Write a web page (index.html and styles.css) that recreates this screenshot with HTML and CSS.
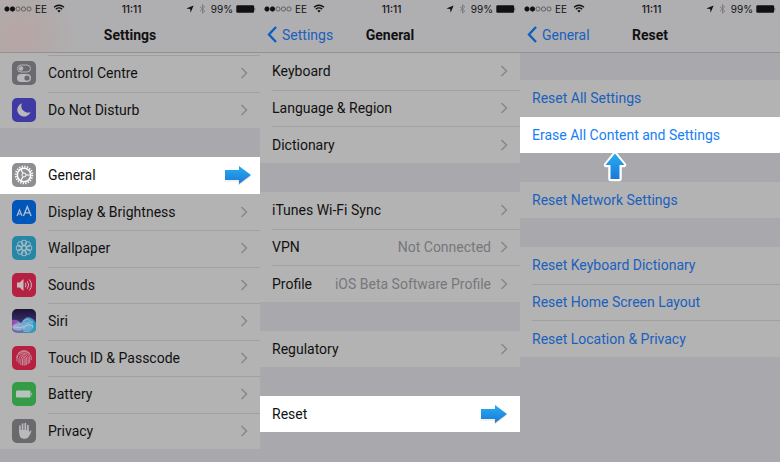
FILE: index.html
```html
<!DOCTYPE html>
<html lang="en">
<head>
<meta charset="utf-8">
<title>Erase All Content and Settings</title>
<link rel="stylesheet" href="styles.css">
</head>
<body>
<svg class="defs" aria-hidden="true">
  <defs>
    <linearGradient id="blue" x1="0" y1="0" x2="0" y2="1"><stop offset="0" stop-color="#27aef0"/><stop offset="1" stop-color="#1c78d8"/></linearGradient>
    <linearGradient id="siri-bg" x1="0" y1="0" x2="0" y2="1"><stop offset="0" stop-color="#1b1237"/><stop offset=".4" stop-color="#34265d"/><stop offset="1" stop-color="#5c7da8"/></linearGradient>
    <linearGradient id="siri-wave" x1="0" y1="0" x2="1" y2="0"><stop offset="0" stop-color="#a43bb0"/><stop offset=".45" stop-color="#6f90ca"/><stop offset="1" stop-color="#229cb9"/></linearGradient>
    <clipPath id="tile"><rect width="24" height="24" rx="5"/></clipPath>
  </defs>
  <symbol id="chevron" viewBox="0 0 8 12"><path d="M1.500 1 6.500 6l-5 5" fill="none" stroke="#88888c" stroke-width="1.500"/></symbol>
  <symbol id="back" viewBox="0 0 10 17"><path d="M9 1 2 8.500 9 16" fill="none" stroke="#0d5fc0" stroke-width="2.400"/></symbol>
  <symbol id="signal" viewBox="0 0 28 6"><g stroke="#111" stroke-width=".8"><circle cx="3" cy="3" r="2.200" fill="#111"/><circle cx="8.500" cy="3" r="2.200" fill="#111"/><g fill="none" stroke="#444" stroke-width=".7"><circle cx="14" cy="3" r="2.100"/><circle cx="19.500" cy="3" r="2.100"/><circle cx="25" cy="3" r="2.100"/></g></g></symbol>
  <symbol id="wifi" viewBox="0 0 12 9"><g fill="none" stroke="#111" stroke-width="1.400"><path d="M1 3.300Q6-.9 11 3.300M2.800 5.200Q6 2.600 9.200 5.200"/></g><path d="M4.300 6.700Q6 5.300 7.700 6.700L6 8.500z" fill="#111"/></symbol>
  <symbol id="locate" viewBox="0 0 8 8"><path d="M7.600.4 4.600 7.800 4.200 3.900.3 3.500z" fill="#111"/></symbol>
  <symbol id="bluetooth" viewBox="0 0 7 10"><path d="M1 2.800 5.700 7 3.500 9.300V.7L5.700 3 1 7.200" fill="none" stroke="#77777a" stroke-width=".9"/></symbol>
  <symbol id="power" viewBox="0 0 20 8"><rect x=".3" y=".3" width="17.800" height="7.400" rx="1.200" fill="#111"/><path d="M18.700 2.500q1.300 1.500 0 3z" fill="#111"/></symbol>
  <symbol id="arrow-right" viewBox="0 0 28 21"><path d="M1 16h14v3.500l11-8.500" fill="none" stroke="#e9e1d6" stroke-width="1.200"/><path d="M1 5h14V1l12 9-12 9v-4H1z" fill="url(#blue)"/></symbol>
  <symbol id="arrow-up" viewBox="0 0 26 32"><path d="M13 3 22 14h-4.500V28h-9V14H4z" fill="#fff" stroke="#fff" stroke-width="4.500" stroke-linejoin="round"/><path d="M13 2.500 22.500 14h-5V28h-9V14h-5z" fill="url(#blue)"/></symbol>
</svg>
<main class="screens">

<section class="screen" aria-label="Settings">
  <header class="bar bar-tinted">
    <div class="status"><span class="side"><svg class="signal"><use href="#signal"/></svg>EE<svg class="wifi"><use href="#wifi"/></svg></span><time>11:11</time><span class="side end"><svg class="locate"><use href="#locate"/></svg><svg class="bluetooth"><use href="#bluetooth"/></svg>99%<svg class="power"><use href="#power"/></svg></span></div>
    <div class="nav"><h1>Settings</h1></div>
  </header>
  <ul class="group rows-2 icons peek">
    <li><a href="#"><svg class="icon" viewBox="0 0 24 24"><rect width="24" height="24" rx="5" fill="#6a6a6f"/><rect x="5.500" y="4" width="13" height="7" rx="3.500" fill="none" stroke="#b5b5b8" stroke-width="1"/><circle cx="9" cy="7.500" r="2.300" fill="#b5b5b8"/><rect x="5" y="13" width="14" height="8" rx="4" fill="#b8b8bb"/><circle cx="15" cy="17" r="2.600" fill="#6a6a6f"/></svg><span>Control Centre</span><svg class="chevron"><use href="#chevron"/></svg></a></li>
    <li><a href="#"><svg class="icon" viewBox="0 0 24 24"><rect width="24" height="24" rx="5" fill="#403aa5"/><path d="M10 5.300A6.800 6.800 0 1 0 18.500 14 6.500 6.500 0 0 1 10 5.300z" fill="#b9b9bd"/></svg><span>Do Not Disturb</span><svg class="chevron"><use href="#chevron"/></svg></a></li>
  </ul>
  <ul class="group rows-8 icons">
    <li class="lit"><a href="#"><svg class="icon" viewBox="0 0 24 24"><rect width="24" height="24" rx="5" fill="#8e8e93"/><g fill="none" stroke="#fff"><circle cx="12" cy="12" r="8.300" stroke-width="2" stroke-dasharray="1.300 1.307"/><circle cx="12" cy="12" r="6.700" stroke-width="1.500"/><circle cx="12" cy="12" r="2" stroke-width="1"/><path d="M14 12h4.500M11 10.300 8.800 6.400M11 13.700l-2.200 3.900" stroke-width="1.200"/></g></svg><span>General</span><svg class="arrow"><use href="#arrow-right"/></svg></a></li>
    <li><a href="#"><svg class="icon" viewBox="0 0 24 24"><rect width="24" height="24" rx="5" fill="#0057b9"/><g fill="none" stroke="#b9c1cc"><path d="m5 16 2.500-6.300L10 16M5.900 14h3.200" stroke-width="1.100"/><path d="m11.500 16 3.800-9.600L19.100 16M12.800 12.900h5" stroke-width="1.300"/></g></svg><span>Display &amp; Brightness</span><svg class="chevron"><use href="#chevron"/></svg></a></li>
    <li><a href="#"><svg class="icon" viewBox="0 0 24 24"><rect width="24" height="24" rx="5" fill="#2785a7"/><g fill="none" stroke="#b6c3c8" stroke-width=".9"><circle cx="12" cy="12" r="2.200"/><circle cx="12" cy="6.800" r="2.700"/><circle cx="15.700" cy="8.300" r="2.700"/><circle cx="17.200" cy="12" r="2.700"/><circle cx="15.700" cy="15.700" r="2.700"/><circle cx="12" cy="17.200" r="2.700"/><circle cx="8.300" cy="15.700" r="2.700"/><circle cx="6.800" cy="12" r="2.700"/><circle cx="8.300" cy="8.300" r="2.700"/></g></svg><span>Wallpaper</span><svg class="chevron"><use href="#chevron"/></svg></a></li>
    <li><a href="#"><svg class="icon" viewBox="0 0 24 24"><rect width="24" height="24" rx="5" fill="#b62041"/><path d="M5 9.500h2.500L11.500 6v12l-4-3.500H5z" fill="#c7babd"/><path d="M13.300 9.800q1.500 2.200 0 4.400M15.300 8.200q2.800 3.800 0 7.600M17.300 6.500q4.300 5.500 0 11" fill="none" stroke="#c7babd" stroke-width="1"/></svg><span>Sounds</span><svg class="chevron"><use href="#chevron"/></svg></a></li>
    <li><a href="#"><svg class="icon" viewBox="0 0 24 24"><g clip-path="url(#tile)"><rect width="24" height="24" fill="url(#siri-bg)"/><path d="M0 11q5-1 9 3 5-8 10-5 3 1 5 5v8q-7 4-13-1-5 3-11 0z" fill="url(#siri-wave)"/><ellipse cx="6" cy="18" rx="6" ry="3.500" fill="#98a6cc"/><ellipse cx="14" cy="17" rx="6" ry="4.500" fill="#74a9cf"/><path d="M5 14q5 0 7 6 3-9 9-7M11 12q8-5 10 6-3 6-10 4" fill="none" stroke="#77c1d5"/><path d="M2 18q6 2 12-1 4-3 7 1" fill="none" stroke="#b4c5da"/></g></svg><span>Siri</span><svg class="chevron"><use href="#chevron"/></svg></a></li>
    <li><a href="#"><svg class="icon" viewBox="0 0 24 24"><rect width="24" height="24" rx="5" fill="#b62041"/><g fill="none" stroke="#c9a6ae" stroke-width=".8"><path d="M6 7.500Q12 1.500 18 7.500M4.700 12Q5 6 12 5.500 19 6 19.300 12v2M5 15.500V12q1-5 7-5t5.700 6v4M7 17.500V12.500q.5-4 5-4t4.200 5V18M8.800 19v-6q.5-3 3.200-3t2.700 3v6M10.500 19.500V13q.3-1.500 1.500-1.500T13.200 13v6.500M12 13v6.500"/></g></svg><span>Touch ID &amp; Passcode</span><svg class="chevron"><use href="#chevron"/></svg></a></li>
    <li><a href="#"><svg class="icon" viewBox="0 0 24 24"><rect width="24" height="24" rx="5" fill="#349c46"/><rect x="4" y="8.500" width="14.500" height="7" rx="1" fill="#b9c2bb"/><path d="M19.200 10.500q2.200 1.500 0 3z" fill="#b9c2bb"/></svg><span>Battery</span><svg class="chevron"><use href="#chevron"/></svg></a></li>
    <li><a href="#"><svg class="icon" viewBox="0 0 24 24"><rect width="24" height="24" rx="5" fill="#6a6a6e"/><path d="M8 13V7M10.600 12V5M13.300 12V4.700M15.900 13V6.500" fill="none" stroke="#bababc" stroke-width="1.700" stroke-linecap="round"/><path d="M7.150 11h9.600v2.500l1.400-1.700q1.400-.6 1.200.6-1.700 4.600-3.300 6-1.300 1.600-4.200 1.400-3.200-.1-4.200-3-.5-2-.5-5.800z" fill="#bababc"/></svg><span>Privacy</span><svg class="chevron"><use href="#chevron"/></svg></a></li>
  </ul>
</section>

<section class="screen" aria-label="General">
  <header class="bar">
    <div class="status"><span class="side"><svg class="signal"><use href="#signal"/></svg>EE<svg class="wifi"><use href="#wifi"/></svg></span><time>11:11</time><span class="side end"><svg class="locate"><use href="#locate"/></svg><svg class="bluetooth"><use href="#bluetooth"/></svg>99%<svg class="power"><use href="#power"/></svg></span></div>
    <div class="nav"><a class="back" href="#"><svg><use href="#back"/></svg>Settings</a><h1>General</h1></div>
  </header>
  <ul class="group rows-3">
    <li><a href="#"><span>Keyboard</span><svg class="chevron"><use href="#chevron"/></svg></a></li>
    <li><a href="#"><span>Language &amp; Region</span><svg class="chevron"><use href="#chevron"/></svg></a></li>
    <li><a href="#"><span>Dictionary</span><svg class="chevron"><use href="#chevron"/></svg></a></li>
  </ul>
  <ul class="group rows-3">
    <li><a href="#"><span>iTunes Wi-Fi Sync</span><svg class="chevron"><use href="#chevron"/></svg></a></li>
    <li><a href="#"><span>VPN</span><span class="value">Not Connected</span><svg class="chevron"><use href="#chevron"/></svg></a></li>
    <li><a href="#"><span>Profile</span><span class="value">iOS Beta Software Profile</span><svg class="chevron"><use href="#chevron"/></svg></a></li>
  </ul>
  <ul class="group">
    <li><a href="#"><span>Regulatory</span><svg class="chevron"><use href="#chevron"/></svg></a></li>
  </ul>
  <ul class="group">
    <li class="lit"><a href="#"><span>Reset</span><svg class="arrow"><use href="#arrow-right"/></svg></a></li>
  </ul>
</section>

<section class="screen actions" aria-label="Reset">
  <header class="bar">
    <div class="status"><span class="side"><svg class="signal"><use href="#signal"/></svg>EE<svg class="wifi"><use href="#wifi"/></svg></span><time>11:11</time><span class="side end"><svg class="locate"><use href="#locate"/></svg><svg class="bluetooth"><use href="#bluetooth"/></svg>99%<svg class="power"><use href="#power"/></svg></span></div>
    <div class="nav"><a class="back" href="#"><svg><use href="#back"/></svg>General</a><h1>Reset</h1></div>
  </header>
  <ul class="group rows-2 spaced">
    <li><button type="button">Reset All Settings</button></li>
    <li class="lit"><button type="button">Erase All Content and Settings</button><svg class="pointer"><use href="#arrow-up"/></svg></li>
  </ul>
  <ul class="group">
    <li><button type="button">Reset Network Settings</button></li>
  </ul>
  <ul class="group rows-3">
    <li><button type="button">Reset Keyboard Dictionary</button></li>
    <li><button type="button">Reset Home Screen Layout</button></li>
    <li><button type="button">Reset Location &amp; Privacy</button></li>
  </ul>
</section>
</main>
</body>
</html>
```
FILE: styles.css
```css
* { box-sizing: border-box; }

body {
  margin: 0;
  background: #a8a8ad;
  color: #111;
  font: 14px/20px Roboto, "Liberation Sans", sans-serif;
}

.defs { position: absolute; width: 0; height: 0; }

.screens {
  display: grid;
  grid-template-columns: repeat(3, 1fr);
  min-height: 100vh;
}

.screen { min-width: 0; background: #a8a8ad; }

/* Status and navigation bars */
.bar {
  background: #afafb1;
  border-bottom: 1px solid #919194;
}

.bar-tinted { background: radial-gradient(circle at 20px 36px, #b8a5a4 0, #b2a9a9 28px, #afafb1 60px); }

.status {
  display: grid;
  grid-template-columns: 1fr auto 1fr;
  align-items: center;
  height: 17px;
  padding: 0 4px;
  font: 10px/16px Inter, "Liberation Sans", sans-serif;
}

.side { display: flex; align-items: center; gap: 3px; }
.end { justify-content: flex-end; }
time { padding-left: 3px; font-weight: 500; }
.signal { width: 28px; height: 6px; }
.wifi { width: 12px; height: 9px; margin-left: 3px; }
.locate { width: 8px; height: 8px; }
.bluetooth { width: 7px; height: 10px; margin: 0 2px; }
.power { width: 20px; height: 8px; }

.nav {
  display: grid;
  grid-template-columns: 1fr auto 1fr;
  align-items: center;
  height: 35px;
  padding: 0 7px;
}

h1 {
  grid-column: 2;
  margin: 0;
  font-size: 14px;
  font-weight: 700;
  line-height: 20px;
}

.back {
  display: flex;
  align-items: center;
  gap: 5px;
  color: #1a60bd;
  text-decoration: none;
}
.back svg { width: 10px; height: 17px; }

/* Row groups */
.group {
  display: grid;
  grid-auto-rows: 1fr;
  min-height: 36px;
  margin: 0;
  padding: 0;
  list-style: none;
  background: #b3b3b3;
}
.group + .group { margin-top: 29px; }
.spaced { margin-top: 27px; }
.rows-2 { min-height: 73px; }
.rows-3 { min-height: 110px; }
.rows-8 { min-height: 292px; }
.peek { border-top: 2px solid #b3b3b3; min-height: 75px; }

.group li { position: relative; display: grid; }

.group li:not(:first-child)::before,
.peek li::before {
  content: "";
  position: absolute;
  inset: 0 0 auto 12px;
  border-top: 1px solid #a0a0a2;
}
.group.icons li::before { left: 48px; }

.group a, .group button {
  display: flex;
  align-items: center;
  width: 100%;
  padding: 0 12px;
  border: 0;
  background: none;
  color: inherit;
  font: inherit;
  text-align: left;
  text-decoration: none;
}

.icon { width: 24px; height: 24px; margin-right: 12px; }
.chevron { width: 8px; height: 12px; margin-left: auto; }
.value { margin-left: auto; color: #77777b; }
.value + .chevron { margin-left: 9px; }
.arrow { width: 28px; height: 21px; margin-left: auto; }
.icons .lit a { padding-right: 8px; }

.actions .group { color: #1a60bd; }

.group .lit { background: #fff; }
.group .lit::before { content: none !important; }
.actions .group .lit { color: #1880f5; }
.group .lit + li::before { border-color: #b3b3b3; }

.pointer {
  position: absolute;
  bottom: -30px;
  left: 82px;
  width: 26px;
  height: 32px;
}
```
